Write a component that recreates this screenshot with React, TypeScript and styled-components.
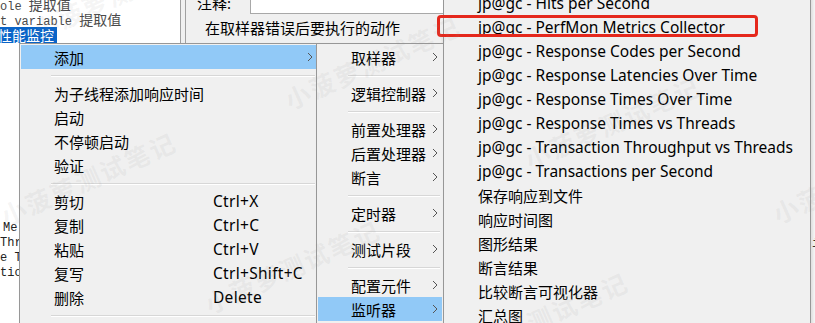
import styled, { createGlobalStyle } from 'styled-components';

const GlobalStyle = createGlobalStyle`
  html, body {
    margin: 0;
    padding: 0;
    background: #f0f0f0;
  }
`;

const UI_FONT = `"Noto Sans", "Noto Sans CJK SC", sans-serif`;

type MenuEntry =
  | { kind: 'item'; label: string; shortcut?: string; sub?: boolean; active?: boolean }
  | { kind: 'sep' };

const mainMenu: MenuEntry[] = [
  { kind: 'item', label: '添加', sub: true, active: true },
  { kind: 'sep' },
  { kind: 'item', label: '为子线程添加响应时间' },
  { kind: 'item', label: '启动' },
  { kind: 'item', label: '不停顿启动' },
  { kind: 'item', label: '验证' },
  { kind: 'sep' },
  { kind: 'item', label: '剪切', shortcut: 'Ctrl+X' },
  { kind: 'item', label: '复制', shortcut: 'Ctrl+C' },
  { kind: 'item', label: '粘贴', shortcut: 'Ctrl+V' },
  { kind: 'item', label: '复写', shortcut: 'Ctrl+Shift+C' },
  { kind: 'item', label: '删除', shortcut: 'Delete' },
  { kind: 'sep' },
  { kind: 'item', label: '打开' },
];

const addMenu: MenuEntry[] = [
  { kind: 'item', label: '取样器', sub: true },
  { kind: 'sep' },
  { kind: 'item', label: '逻辑控制器', sub: true },
  { kind: 'sep' },
  { kind: 'item', label: '前置处理器', sub: true },
  { kind: 'item', label: '后置处理器', sub: true },
  { kind: 'item', label: '断言', sub: true },
  { kind: 'sep' },
  { kind: 'item', label: '定时器', sub: true },
  { kind: 'sep' },
  { kind: 'item', label: '测试片段', sub: true },
  { kind: 'sep' },
  { kind: 'item', label: '配置元件', sub: true },
  { kind: 'item', label: '监听器', sub: true, active: true },
];

const listeners = [
  'jp@gc - Hits per Second',
  'jp@gc - PerfMon Metrics Collector',
  'jp@gc - Response Codes per Second',
  'jp@gc - Response Latencies Over Time',
  'jp@gc - Response Times Over Time',
  'jp@gc - Response Times vs Threads',
  'jp@gc - Transaction Throughput vs Threads',
  'jp@gc - Transactions per Second',
  '保存响应到文件',
  '响应时间图',
  '图形结果',
  '断言结果',
  '比较断言可视化器',
  '汇总图',
];

// watermark stamps: centre x, centre y
const stamps = [
  [120, -8],
  [88, 178],
  [372, 62],
  [292, 266],
  [612, 122],
  [540, 318],
  [860, 176],
];

const isLatin = (s: string) => /^[\x20-\x7e]+$/.test(s);

function Chevron() {
  return (
    <svg width="6" height="10" viewBox="0 0 6 10">
      <path d="M1 1 L5 5 L1 9" fill="none" stroke="#555" strokeWidth="1" />
    </svg>
  );
}

function Menu({ entries, textCol }: { entries: MenuEntry[]; textCol: number }) {
  return (
    <>
      {entries.map((e, i) =>
        e.kind === 'sep' ? (
          <Separator key={i} />
        ) : (
          <Item key={i} $active={e.active} $textCol={textCol}>
            <Label $latin={isLatin(e.label)}>{e.label}</Label>
            <Shortcut>{e.shortcut}</Shortcut>
            <Arrow>{e.sub && <Chevron />}</Arrow>
          </Item>
        ),
      )}
    </>
  );
}

export default function App() {
  return (
    <>
      <GlobalStyle />
      <Screen>
        <Workspace>
          <TreePanel>
            <TreeGroup>
              <TreeLine>
                ole <Cjk>提取值</Cjk>
              </TreeLine>
              <TreeLine>
                t variable <Cjk>提取值</Cjk>
              </TreeLine>
              <TreeLine>
                <Selected>
                  <Cjk>性能监控</Cjk>
                </Selected>
              </TreeLine>
            </TreeGroup>
            <TreeGroup $bottom>
              <TreeLine $indent={3}>Me</TreeLine>
              <TreeLine>Thr</TreeLine>
              <TreeLine>e T</TreeLine>
              <TreeLine>tio</TreeLine>
            </TreeGroup>
          </TreePanel>
          <SplitBar />
          <EditorPanel>
            <CommentRow>
              <FieldLabel>注释:</FieldLabel>
              <TextField />
            </CommentRow>
            <ActionTitle>在取样器错误后要执行的动作</ActionTitle>
          </EditorPanel>
          <EdgeStrip>
            <EdgeChar>i</EdgeChar>
          </EdgeStrip>
        </Workspace>

        <PopupMenu $left={19} $top={43} $width={300}>
          <Menu entries={mainMenu} textCol={159} />
        </PopupMenu>
        <PopupMenu $left={316} $top={43} $width={128}>
          <Menu entries={addMenu} textCol={80} />
        </PopupMenu>
        <PopupMenu $left={443} $top={-11} $width={368}>
          {listeners.map((l) => (
            <Item key={l} $textCol={320}>
              <Label $latin={isLatin(l)}>{l}</Label>
            </Item>
          ))}
        </PopupMenu>

        <Callout />
        {stamps.map(([x, y], i) => (
          <Watermark key={i} style={{ left: x, top: y }}>
            小菠萝测试笔记
          </Watermark>
        ))}
      </Screen>
    </>
  );
}

const Screen = styled.div`
  position: relative;
  width: 815px;
  height: 323px;
  overflow: hidden;
  background: #f0f0f0;
`;

const Workspace = styled.div`
  display: flex;
  height: 100%;
`;

const TreePanel = styled.div`
  width: 180px;
  flex-shrink: 0;
  background: #fff;
  border-right: 1px solid #a0a0a0;
  display: flex;
  flex-direction: column;
  overflow: hidden;
  font-family: "Liberation Mono", "Noto Sans CJK SC", monospace;
  font-size: 12px;
  color: #4a4a4a;
`;

const TreeGroup = styled.div<{ $bottom?: boolean }>`
  display: flex;
  flex-direction: column;
  margin-top: ${(p) => (p.$bottom ? 'auto' : '-3px')};
  margin-bottom: ${(p) => (p.$bottom ? '42px' : '0')};
  color: ${(p) => (p.$bottom ? '#222' : '#4a4a4a')};
`;

const TreeLine = styled.div<{ $indent?: number }>`
  height: 15px;
  line-height: 15px;
  white-space: pre;
  padding-left: ${(p) => p.$indent ?? 0}px;
`;

const Cjk = styled.span`
  font-family: "Noto Sans CJK SC", sans-serif;
  font-size: 14px;
`;

const Selected = styled.span`
  display: inline-block;
  height: 16px;
  line-height: 16px;
  margin-left: -2px;
  padding: 0 3px 0 0;
  background: #0a64c8;
  color: #fff;
`;

const SplitBar = styled.div`
  width: 4px;
  flex-shrink: 0;
  background: #f0f0f0;
  border-right: 1px solid #a0a0a0;
`;

const EditorPanel = styled.div`
  flex: 1;
  display: flex;
  flex-direction: column;
  font-family: ${UI_FONT};
  font-size: 15px;
  color: #000;
`;

const CommentRow = styled.div`
  display: flex;
  height: 20px;
  margin-top: -6px;
`;

const FieldLabel = styled.div`
  width: 53px;
  padding-left: 11px;
  line-height: 18px;
`;

const TextField = styled.div`
  flex: 1;
  background: #fff;
  border-left: 1px solid #a8a8a8;
  border-bottom: 1px solid #a8a8a8;
`;

const ActionTitle = styled.div`
  padding-left: 19px;
  margin-top: 3px;
  line-height: 22px;
`;

const EdgeStrip = styled.div`
  width: 4px;
  flex-shrink: 0;
  background: #f7f7f7;
  border-left: 1px solid #b0b0b0;
  display: flex;
  flex-direction: column;
  padding-top: 237px;
  font-family: "Liberation Mono", monospace;
  font-size: 12px;
`;

const EdgeChar = styled.span`
  color: #333;
  margin-left: 1px;
`;

const PopupMenu = styled.div<{ $left: number; $top: number; $width: number }>`
  position: absolute;
  left: ${(p) => p.$left}px;
  top: ${(p) => p.$top}px;
  width: ${(p) => p.$width}px;
  box-sizing: border-box;
  background: #f0f0f0;
  border: 1px solid #979797;
  padding: 1px 1px 4px;
  font-family: ${UI_FONT};
  font-size: 15px;
  color: #000;
  box-shadow: 2px 2px 3px rgba(0, 0, 0, 0.1);
`;

const Item = styled.div<{ $active?: boolean; $textCol: number }>`
  display: grid;
  grid-template-columns: ${(p) => p.$textCol}px 1fr 10px;
  align-items: center;
  height: 24px;
  padding-left: 33px;
  white-space: nowrap;
  background: ${(p) => (p.$active ? '#91c9f7' : 'transparent')};
`;

const Label = styled.span<{ $latin?: boolean }>`
  font-size: ${(p) => (p.$latin ? '15.5px' : '15px')};
`;

const Shortcut = styled.span`
  font-size: 15.5px;
  letter-spacing: 0.3px;
  color: #000;
`;

const Arrow = styled.span`
  display: flex;
  align-items: center;
`;

const Separator = styled.div`
  height: 12px;
  display: flex;
  align-items: center;
  margin: 0 2px 0 30px;
  &::before {
    content: '';
    flex: 1;
    height: 1px;
    background: #d7d7d7;
    box-shadow: 0 1px 0 #fff;
  }
`;

const Callout = styled.div`
  position: absolute;
  left: 437px;
  top: 15px;
  width: 321px;
  height: 22px;
  box-sizing: border-box;
  border: 3px solid #e5281c;
  border-radius: 4px;
`;

const Watermark = styled.span`
  position: absolute;
  transform: translate(-50%, -50%) rotate(-24deg);
  font-family: "Noto Sans CJK SC", sans-serif;
  font-weight: 700;
  font-size: 25px;
  letter-spacing: 2px;
  white-space: nowrap;
  color: rgba(150, 150, 150, 0.1);
  pointer-events: none;
`;
